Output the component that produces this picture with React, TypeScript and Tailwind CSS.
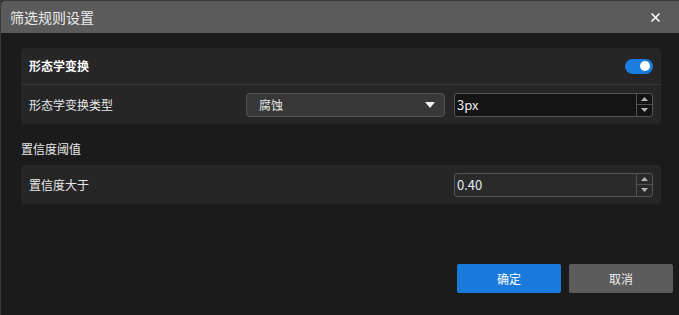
function Spinner() {
    return (
        <div className="flex flex-col w-4 border-l border-[#505050]">
            <div className="flex-1 flex items-center justify-center border-b border-[#505050]">
                <svg width="7" height="4" viewBox="0 0 7 4"><path d="M0 4 L3.5 0 L7 4 Z" fill="#b5b5b5" /></svg>
            </div>
            <div className="flex-1 flex items-center justify-center">
                <svg width="7" height="4" viewBox="0 0 7 4"><path d="M0 0 L3.5 4 L7 0 Z" fill="#b5b5b5" /></svg>
            </div>
        </div>
    );
}

function NumberInput({ value, bg }: { value: string; bg: string }) {
    return (
        <div className={`flex w-[199px] h-6 rounded-[3px] border border-[#555] ${bg}`}>
            <div className="flex-1 flex items-center pl-[2px] text-[13px] text-[#e4ebf5]">{value}</div>
            <Spinner />
        </div>
    );
}

export default function App() {
    return (
        <div className="w-[679px] h-[315px] flex flex-col bg-[#1b1b1b] border-t border-l border-[#3a3a3a] font-['Noto_Sans_CJK_SC',sans-serif] text-[#e8e8e8] overflow-hidden">
            <div className="h-8 flex items-center justify-between bg-[#5b5b5b] rounded-tl-[4px] pl-[9px] pr-[19px]">
                <span className="text-[14px] text-[#ececec]">筛选规则设置</span>
                <svg width="9" height="9" viewBox="0 0 9 9">
                    <path d="M0.5 0.5 L8.5 8.5 M8.5 0.5 L0.5 8.5" stroke="#fff" strokeWidth="1.5" />
                </svg>
            </div>

            <div className="flex-1 flex flex-col px-5 pt-[15px]">
                <div className="w-[640px] bg-[#262626] rounded-[4px]">
                    <div className="h-[37px] flex items-center justify-between pl-2 pr-2 border-b border-[#383838]">
                        <span className="text-[12px] font-bold text-white">形态学变换</span>
                        <div className="w-[28px] h-[15px] rounded-full bg-[#1a7ee0] flex items-center justify-end pr-[3px]">
                            <div className="w-[10px] h-[10px] rounded-full bg-white" />
                        </div>
                    </div>
                    <div className="h-[39px] flex items-center pl-2 pr-2">
                        <span className="text-[12px] flex-1">形态学变换类型</span>
                        <div className="w-[199px] h-6 flex items-center justify-between bg-[#383838] border border-[#555] rounded-[4px] pl-3 pr-[9px] text-[12px]">
                            <span>腐蚀</span>
                            <svg width="10" height="6" viewBox="0 0 10 6"><path d="M0 0 L10 0 L5 6 Z" fill="#f0f0f0" /></svg>
                        </div>
                        <div className="ml-[9px]">
                            <NumberInput value="3px" bg="bg-[#141414]" />
                        </div>
                    </div>
                </div>

                <div className="h-[41px] flex items-center pt-[9px] text-[12px]">置信度阈值</div>

                <div className="w-[640px] h-[39px] flex items-center bg-[#262626] rounded-[4px] pl-2 pr-2">
                    <span className="text-[12px] flex-1">置信度大于</span>
                    <NumberInput value="0.40" bg="bg-[#2a2a2a]" />
                </div>

                <div className="flex-1" />

                <div className="flex justify-end gap-2 mr-[-14px] mb-[22px]">
                    <button className="w-[104px] h-[29px] rounded-[2px] bg-[#1a7adb] text-[12px] text-white">确定</button>
                    <button className="w-[104px] h-[29px] rounded-[2px] bg-[#5c5c5c] text-[12px] text-[#eee]">取消</button>
                </div>
            </div>
        </div>
    );
}
